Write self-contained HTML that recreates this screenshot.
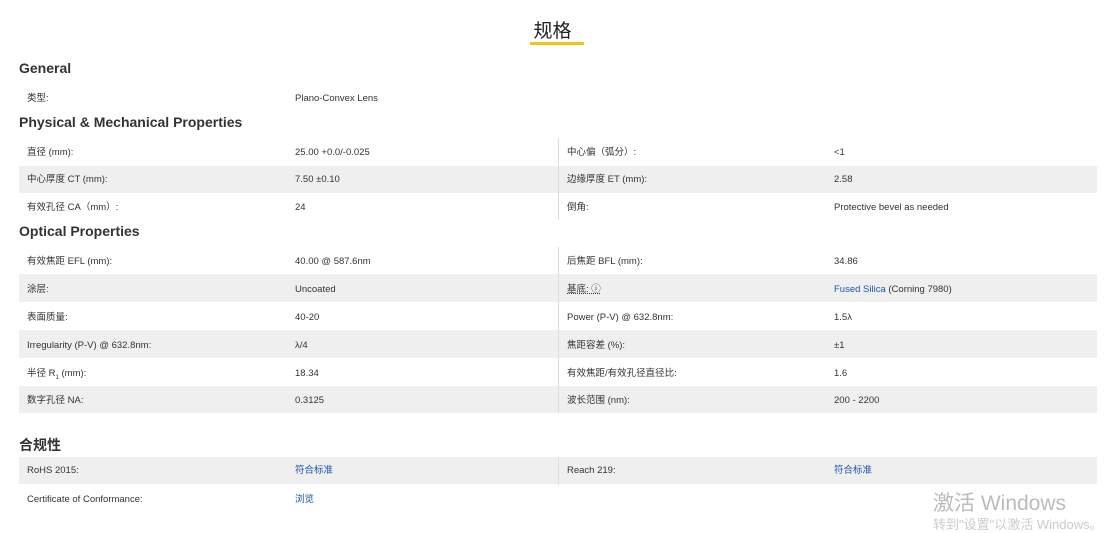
<!DOCTYPE html>
<html><head><meta charset="utf-8"><style>
body{margin:0;width:1105px;height:526px;background:#fff;font-family:"Liberation Sans","Noto Sans CJK SC",sans-serif;color:#333;position:relative;overflow:hidden}
.t{position:absolute;left:0;width:1105px;text-align:center;top:16px;font-size:19px;color:#222}
.ul{position:absolute;left:530px;top:42px;width:54px;height:3px;background:#f0c419}
h3{position:absolute;left:19px;margin:0;font-size:14px;font-weight:bold;color:#333}
.r{position:absolute;left:19px;width:1078px;height:28px;font-size:9.5px;line-height:28px}
.g{background:#efefef}
.r span{position:absolute;top:0}
.a{left:8px}.b{left:276px}.c{left:548px}.d{left:815px}
.v{position:absolute;left:558px;width:1px;background:#ddd;z-index:2}
.l{color:#1a56a8}
.wm{position:absolute;left:933px;top:487px;font-size:21px;color:#bbb}
.wm2{position:absolute;left:933px;top:514px;font-size:13px;color:#ccc}
</style></head><body>
<div class="t">规格</div><div class="ul"></div>
<h3 style="top:60px">General</h3>
<div class="r" style="top:85px"><span class="a">类型:</span><span class="b">Plano-Convex Lens</span></div>
<h3 style="top:114px">Physical &amp; Mechanical Properties</h3>
<div class="v" style="top:138px;height:82px"></div>
<div class="r" style="top:139px"><span class="a">直径 (mm):</span><span class="b">25.00 +0.0/-0.025</span><span class="c">中心偏（弧分）:</span><span class="d">&lt;1</span></div>
<div class="r g" style="top:166px;height:27px"><span class="a">中心厚度 CT (mm):</span><span class="b">7.50 ±0.10</span><span class="c">边缘厚度 ET (mm):</span><span class="d">2.58</span></div>
<div class="r" style="top:194px"><span class="a">有效孔径 CA（mm）:</span><span class="b">24</span><span class="c">倒角:</span><span class="d">Protective bevel as needed</span></div>
<h3 style="top:223px">Optical Properties</h3>
<div class="v" style="top:247px;height:166px"></div>
<div class="r" style="top:248px"><span class="a">有效焦距 EFL (mm):</span><span class="b">40.00 @ 587.6nm</span><span class="c">后焦距 BFL (mm):</span><span class="d">34.86</span></div>
<div class="r g" style="top:274px"><span class="a" style="top:2px">涂层:</span><span class="b" style="top:2px">Uncoated</span><span class="c" style="top:2px;text-decoration:underline dotted">基底: ⓘ</span><span class="d" style="top:2px"><span class="l" style="position:static">Fused Silica</span> (Corning 7980)</span></div>
<div class="r" style="top:304px"><span class="a">表面质量:</span><span class="b">40-20</span><span class="c">Power (P-V) @ 632.8nm:</span><span class="d">1.5λ</span></div>
<div class="r g" style="top:330px"><span class="a" style="top:2px">Irregularity (P-V) @ 632.8nm:</span><span class="b" style="top:2px">λ/4</span><span class="c" style="top:2px">焦距容差 (%):</span><span class="d" style="top:2px">±1</span></div>
<div class="r" style="top:360px"><span class="a">半径 R<sub style="font-size:6px">1</sub> (mm):</span><span class="b">18.34</span><span class="c">有效焦距/有效孔径直径比:</span><span class="d">1.6</span></div>
<div class="r g" style="top:386px;height:27px"><span class="a" style="top:1px">数字孔径 NA:</span><span class="b" style="top:1px">0.3125</span><span class="c" style="top:1px">波长范围 (nm):</span><span class="d" style="top:1px">200 - 2200</span></div>
<h3 style="top:435px">合规性</h3>
<div class="v" style="top:457px;height:28px"></div>
<div class="r g" style="top:457px;height:27px"><span class="a" style="top:0px">RoHS 2015:</span><span class="b l">符合标准</span><span class="c">Reach 219:</span><span class="d l">符合标准</span></div>
<div class="r" style="top:486px"><span class="a">Certificate of Conformance:</span><span class="b l">浏览</span></div>
<div class="wm">激活 Windows</div>
<div class="wm2">转到"设置"以激活 Windows。</div>
</body></html>
